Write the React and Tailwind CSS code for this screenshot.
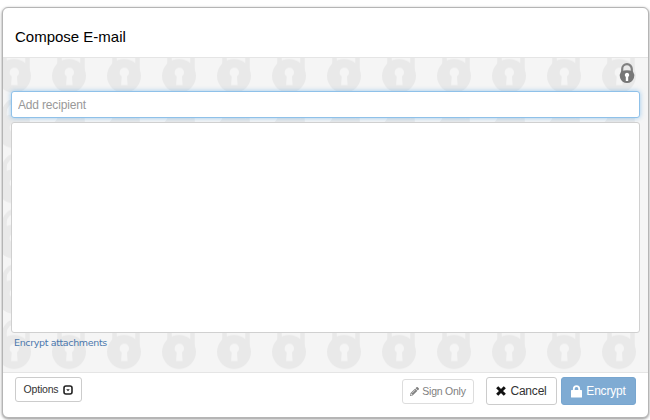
import { FaPencilAlt } from "react-icons/fa";

function LockPattern() {
  return (
    <svg className="absolute inset-0 h-full w-full" aria-hidden="true">
      <defs>
        <pattern id="locks" x="-17" y="-18" width="55" height="55.2" patternUnits="userSpaceOnUse">
          <path d="M18.5 29V17a11.5 11.5 0 0 1 23 0V30" fill="none" stroke="#e9e9e9" strokeWidth="4.5" />
          <circle cx="28" cy="36" r="17" fill="#e9e9e9" />
          <path d="M28 27.5a5 5 0 0 1 3 9l.6 8.500h-6.500l.6-8.500a5 5 0 0 1 2.300-9z" fill="#f5f5f5" />
        </pattern>
      </defs>
      <rect width="100%" height="100%" fill="url(#locks)" />
    </svg>
  );
}

function SecurityLock() {
  return (
    <svg width="16" height="22" viewBox="0 0 16 22" className="absolute top-[5px] right-[13px]">
      <path d="M3.2 10V6a4.8 4.8 0 0 1 9.6 0v4" fill="none" stroke="#808080" strokeWidth="2.2" />
      <path d="M2 8.5q6-2.5 12 0 2 3 .9 6.5Q13 20 8 20t-6.9-5Q0 11.5 2 8.5z" fill="#777" />
      <path d="M8 9.7a2.3 2.3 0 0 1 1.2 4.2V18H6.8v-4.1A2.3 2.3 0 0 1 8 9.7z" fill="#fff" />
    </svg>
  );
}

export default function App() {
  return (
    <div className="h-[420px] w-[650px] bg-white px-[2px] pt-[7px] font-['Liberation_Sans',sans-serif] text-[#333]">
      <div className="flex h-[411px] w-[647px] flex-col overflow-hidden rounded-[6px] border border-[#b5b5b5] bg-white shadow-[0_1px_3px_rgba(0,0,0,0.45)]">
        <header className="flex h-[50px] shrink-0 items-center border-b border-[#e5e5e5] px-3 pt-[9px]">
          <h1 className="text-[15px] leading-5 text-black">Compose E-mail</h1>
        </header>

        <main className="relative h-[315px] shrink-0 border-b border-[#e5e5e5] bg-[#f5f5f5] px-2 pt-[33px]">
          <LockPattern />
          <SecurityLock />
          <input
            className="relative block h-[27px] w-full rounded-[3px] border border-[#8fc1e9] bg-white px-1.5 text-[12px] tracking-[-0.17px] shadow-[0_0_5px_rgba(102,175,233,0.6)] outline-none placeholder:text-[#999]"
            placeholder="Add recipient"
          />
          <textarea className="relative mt-1 block h-[211px] w-full resize-none rounded-[3px] border border-[#d0d0d0] bg-white outline-none" />
          <a className="relative ml-[3px] mt-1 block w-max font-['DejaVu_Sans',sans-serif] text-[9.5px] leading-3 tracking-[-0.36px] text-[#4b78ad]">
            Encrypt attachments
          </a>
        </main>

        <footer className="flex items-start px-3 pt-1">
          <button className="flex h-[25px] w-[67px] items-center justify-center gap-[5px] rounded-[3px] border border-[#ccc] text-[10.5px] tracking-[-0.2px]">
            Options
            <svg width="10" height="10" viewBox="0 0 10 10">
              <rect x="1" y="1" width="8" height="8" rx="2" fill="none" stroke="#222" strokeWidth="1.6" />
              <path d="M3.2 4.3h3.6L5 6.3z" fill="#222" />
            </svg>
          </button>
          <button className="ml-auto mt-[2px] flex h-[25px] w-[72px] items-center justify-center gap-[3px] rounded-[3px] border border-[#ddd] text-[10.5px] tracking-[-0.25px] text-[#808080]">
            <FaPencilAlt size={9} />
            Sign Only
          </button>
          <button className="ml-3 flex h-[28px] w-[71px] items-center justify-center gap-1 rounded-[3px] border border-[#ccc] text-[12px] tracking-[-0.2px]">
            <svg width="10" height="10" viewBox="0 0 10 10">
              <path d="M1.2 1.2l7.6 7.6M8.8 1.2L1.2 8.8" stroke="#111" strokeWidth="3" />
            </svg>
            Cancel
          </button>
          <button className="ml-1 flex h-[28px] w-[75px] items-center justify-center gap-1 rounded-[3px] border border-[#78a6d0] bg-[#7fabd3] text-[12px] tracking-[-0.2px] text-white">
            <svg width="11" height="13" viewBox="0 0 11 13">
              <path d="M2.8 6V3.8a2.7 2.7 0 0 1 5.4 0V6" fill="none" stroke="#fff" strokeWidth="1.8" />
              <rect y="5" width="11" height="7.5" rx="0.6" fill="#fff" />
            </svg>
            Encrypt
          </button>
        </footer>
      </div>
    </div>
  );
}
